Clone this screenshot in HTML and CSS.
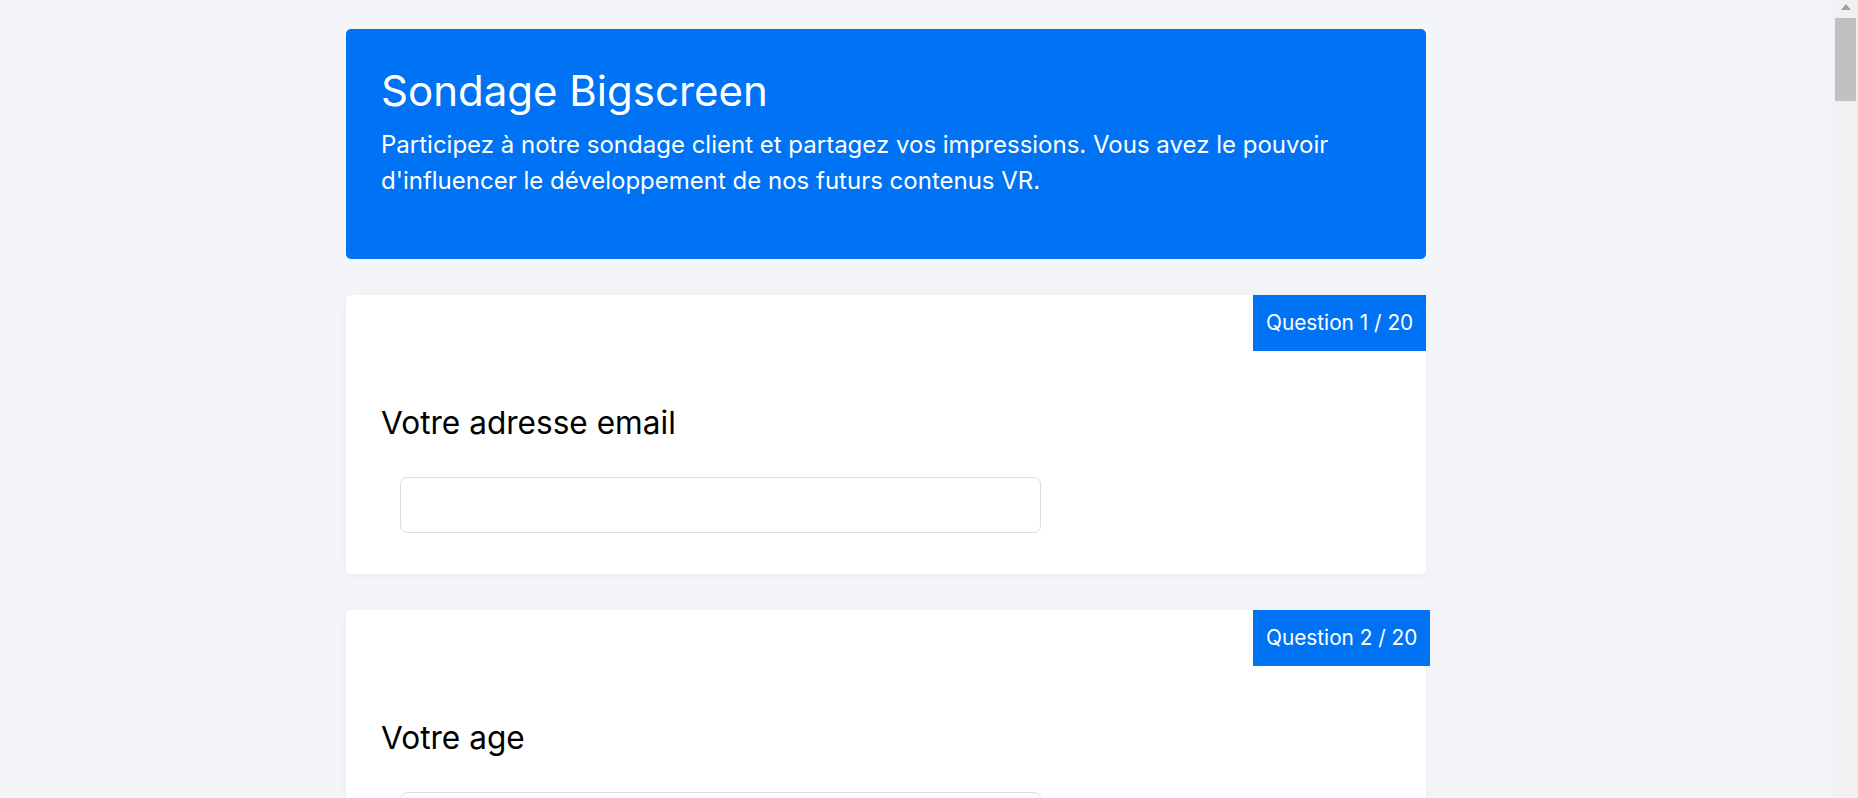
FILE: index.html
```html
<!DOCTYPE html>
<html lang="fr">
<head>
<meta charset="utf-8">
<title>Sondage Bigscreen</title>
<link rel="stylesheet" href="styles.css">
</head>
<body>
<main class="survey">
  <header class="hero">
    <h1 class="hero-title">Sondage Bigscreen</h1>
    <p class="hero-lead">Participez à notre sondage client et partagez vos impressions. Vous avez le pouvoir d'influencer le développement de nos futurs contenus VR.</p>
  </header>

  <section class="q-card">
    <div class="q-top"><span class="q-badge">Question 1 / 20</span></div>
    <div class="q-body">
      <h2 class="q-label">Votre adresse email</h2>
      <input class="q-input" type="email">
    </div>
  </section>

  <section class="q-card">
    <div class="q-top"><span class="q-badge">Question 2 / 20</span></div>
    <div class="q-body">
      <h2 class="q-label">Votre age</h2>
      <input class="q-input" type="number">
    </div>
  </section>

  <section class="q-card">
    <div class="q-top"><span class="q-badge">Question 3 / 20</span></div>
    <div class="q-body">
      <h2 class="q-label">Votre sexe</h2>
      <input class="q-input" type="text">
    </div>
  </section>

  <section class="q-card">
    <div class="q-top"><span class="q-badge">Question 4 / 20</span></div>
    <div class="q-body">
      <h2 class="q-label">Nombre de personne dans votre foyer (adulte &amp; enfants)</h2>
      <input class="q-input" type="text">
    </div>
  </section>

  <section class="q-card">
    <div class="q-top"><span class="q-badge">Question 5 / 20</span></div>
    <div class="q-body">
      <h2 class="q-label">Votre profession</h2>
      <input class="q-input" type="text">
    </div>
  </section>

  <section class="q-card">
    <div class="q-top"><span class="q-badge">Question 6 / 20</span></div>
    <div class="q-body">
      <h2 class="q-label">Quel marque de casque VR utilisez-vous ?</h2>
      <input class="q-input" type="text">
    </div>
  </section>

  <section class="q-card">
    <div class="q-top"><span class="q-badge">Question 7 / 20</span></div>
    <div class="q-body">
      <h2 class="q-label">Sur quel magasin d'application achetez-vous des contenus VR ?</h2>
      <input class="q-input" type="text">
    </div>
  </section>

  <section class="q-card">
    <div class="q-top"><span class="q-badge">Question 8 / 20</span></div>
    <div class="q-body">
      <h2 class="q-label">Quel casque envisagez-vous d'acheter dans un futur proche ?</h2>
      <input class="q-input" type="text">
    </div>
  </section>

  <section class="q-card">
    <div class="q-top"><span class="q-badge">Question 9 / 20</span></div>
    <div class="q-body">
      <h2 class="q-label">Au sein de votre foyer, combien de personnes utilisent votre casque VR ?</h2>
      <input class="q-input" type="text">
    </div>
  </section>

  <section class="q-card">
    <div class="q-top"><span class="q-badge">Question 10 / 20</span></div>
    <div class="q-body">
      <h2 class="q-label">Vous utilisez principalement Bigscreen pour :</h2>
      <input class="q-input" type="text">
    </div>
  </section>

  <section class="q-card">
    <div class="q-top"><span class="q-badge">Question 11 / 20</span></div>
    <div class="q-body">
      <h2 class="q-label">Combien donnez-vous de point pour la qualité de l'image sur Bigscreen ?</h2>
      <input class="q-input" type="text">
    </div>
  </section>

  <section class="q-card">
    <div class="q-top"><span class="q-badge">Question 12 / 20</span></div>
    <div class="q-body">
      <h2 class="q-label">Combien donnez-vous de point pour le confort d'utilisation de l'interface Bigscreen ?</h2>
      <input class="q-input" type="text">
    </div>
  </section>

  <section class="q-card">
    <div class="q-top"><span class="q-badge">Question 13 / 20</span></div>
    <div class="q-body">
      <h2 class="q-label">Combien donnez-vous de point pour la connexion réseau de Bigscreen ?</h2>
      <input class="q-input" type="text">
    </div>
  </section>

  <section class="q-card">
    <div class="q-top"><span class="q-badge">Question 14 / 20</span></div>
    <div class="q-body">
      <h2 class="q-label">Combien donnez-vous de point pour la qualité des graphismes 3D dans Bigscreen ?</h2>
      <input class="q-input" type="text">
    </div>
  </section>

  <section class="q-card">
    <div class="q-top"><span class="q-badge">Question 15 / 20</span></div>
    <div class="q-body">
      <h2 class="q-label">Combien donnez-vous de point pour la qualité audio dans Bigscreen ?</h2>
      <input class="q-input" type="text">
    </div>
  </section>

  <section class="q-card">
    <div class="q-top"><span class="q-badge">Question 16 / 20</span></div>
    <div class="q-body">
      <h2 class="q-label">Aimeriez-vous avoir des notifications plus précises au cours de vos sessions Bigscreen ?</h2>
      <input class="q-input" type="text">
    </div>
  </section>

  <section class="q-card">
    <div class="q-top"><span class="q-badge">Question 17 / 20</span></div>
    <div class="q-body">
      <h2 class="q-label">Aimeriez-vous pouvoir inviter un ami à rejoindre votre session via son smartphone ?</h2>
      <input class="q-input" type="text">
    </div>
  </section>

  <section class="q-card">
    <div class="q-top"><span class="q-badge">Question 18 / 20</span></div>
    <div class="q-body">
      <h2 class="q-label">Aimeriez-vous pouvoir enregistrer des émissions TV pour pouvoir les regarder ultérieurement ?</h2>
      <input class="q-input" type="text">
    </div>
  </section>

  <section class="q-card">
    <div class="q-top"><span class="q-badge">Question 19 / 20</span></div>
    <div class="q-body">
      <h2 class="q-label">Aimeriez-vous jouer à des jeux exclusifs sur votre Bigscreen ?</h2>
      <input class="q-input" type="text">
    </div>
  </section>

  <section class="q-card">
    <div class="q-top"><span class="q-badge">Question 20 / 20</span></div>
    <div class="q-body">
      <h2 class="q-label">Quelle nouvelle fonctionnalité de vos rêves devrait exister sur Bigscreen ?</h2>
      <input class="q-input" type="text">
    </div>
  </section>
</main>

<div class="scrollbar" aria-hidden="true">
  <div class="scrollbar-up"></div>
  <div class="scrollbar-thumb"></div>
</div>
</body>
</html>
```

FILE: styles.css
```css
html {
  background: #f4f5f9;
}

body {
  margin: 0;
  font-family: Inter, "Noto Sans", "Liberation Sans", sans-serif;
  color: #111;
}

.survey {
  width: 1080px;
  margin-left: 346px;
  padding: 29px 0 40px;
  display: flex;
  flex-direction: column;
  gap: 36px;
}

.hero {
  background: #0073f4;
  color: #fff;
  border-radius: 5px;
  padding: 35px 35px 60px;
}

.hero-title {
  margin: 0;
  font-size: 42px;
  font-weight: 400;
  line-height: 53px;
}

.hero-lead {
  margin: 10px 0 0;
  font-size: 24px;
  line-height: 36px;
}

.q-card {
  background: #fff;
  border-radius: 5px;
  box-shadow: 0 2px 12px rgba(20, 30, 60, 0.035);
}

.q-top {
  display: flex;
  height: 56px;
}

.q-badge {
  flex: none;
  margin-left: 907px;
  height: 56px;
  padding: 0 13px 0 13px;
  background: #0073f4;
  color: #fff;
  font-size: 20.8px;
  line-height: 56px;
  white-space: nowrap;
}

.q-body {
  padding: 53px 35px 41px;
}

.q-label {
  margin: 0;
  font-size: 31.6px;
  font-weight: 400;
  line-height: 37px;
  color: #000;
}

.q-input {
  display: block;
  box-sizing: border-box;
  width: 641px;
  height: 56px;
  margin: 36px 0 0 19px;
  border: 1px solid #dcdee3;
  border-radius: 7px;
  background: #fff;
  font: inherit;
}

.scrollbar {
  position: fixed;
  top: 0;
  right: 0;
  bottom: 0;
  width: 25px;
  background: #f1f1f1;
  display: flex;
  flex-direction: column;
  align-items: center;
}

.scrollbar-up {
  width: 0;
  height: 0;
  margin-top: 4px;
  border-left: 5.5px solid transparent;
  border-right: 5.5px solid transparent;
  border-bottom: 6px solid #a3a3a3;
}

.scrollbar-thumb {
  align-self: stretch;
  margin: 8px 2px 0;
  height: 83px;
  background: #c1c1c1;
}
```
